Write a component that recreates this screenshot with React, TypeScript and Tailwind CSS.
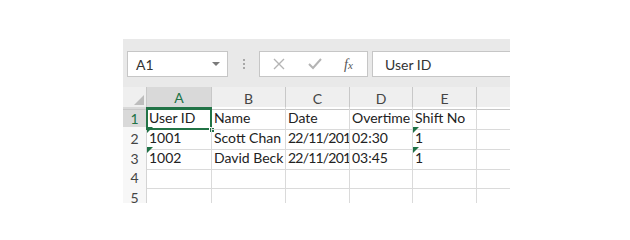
import React from 'react';

const cols = ['A', 'B', 'C', 'D', 'E', ''];

const rows: { cells: string[]; flags: boolean[] }[] = [
    { cells: ['User ID', 'Name', 'Date', 'Overtime', 'Shift No', ''], flags: [false, false, false, false, false, false] },
    { cells: ['1001', 'Scott Chan', '22/11/201', '02:30', '1', ''], flags: [true, false, false, false, true, false] },
    { cells: ['1002', 'David Beck', '22/11/201', '03:45', '1', ''], flags: [true, false, false, false, true, false] },
    { cells: ['', '', '', '', '', ''], flags: [false, false, false, false, false, false] },
    { cells: ['', '', '', '', '', ''], flags: [false, false, false, false, false, false] },
];

const FormulaBar: React.FC = () => (
    <div className="flex items-center h-[48px] pt-[12px] pb-[10px] pl-[4px] bg-[#e9e9e9]">
        <div className="relative flex items-center w-[101px] h-[26px] bg-white border border-[#c6c6c6] pl-[8px] text-[14px] text-[#333]">
            A1
            <span className="absolute right-[7px] top-[10px] w-0 h-0 border-l-[4px] border-r-[4px] border-t-[4px] border-l-transparent border-r-transparent border-t-[#7a7a7a]" />
        </div>
        <div className="flex flex-col gap-[2px] w-[31px] items-center">
            <span className="w-[2px] h-[2px] bg-[#a8a8a8]" />
            <span className="w-[2px] h-[2px] bg-[#a8a8a8]" />
            <span className="w-[2px] h-[2px] bg-[#a8a8a8]" />
        </div>
        <div className="flex items-center w-[109px] h-[26px] bg-white border border-[#c6c6c6]">
            <svg width="12" height="12" viewBox="0 0 12 12" className="ml-[13px]">
                <path d="M1 1 L11 11 M11 1 L1 11" stroke="#b4b4b4" strokeWidth="1.4" fill="none" />
            </svg>
            <svg width="14" height="12" viewBox="0 0 14 12" className="ml-[23px]">
                <path d="M1 6 L5 10 L13 1" stroke="#b4b4b4" strokeWidth="2" fill="none" />
            </svg>
            <span className="ml-[22px] text-[14px] italic text-[#555]" style={{ fontFamily: '"Liberation Serif", serif' }}>
                f<span className="text-[11px]">x</span>
            </span>
        </div>
        <div className="flex items-center flex-1 h-[26px] ml-[4px] bg-white border-y border-l border-[#c6c6c6] pl-[12px] text-[14px] text-[#333]">
            User ID
        </div>
    </div>
);

const App: React.FC = () => (
    <div className="w-[630px] h-[240px] bg-white pt-[39px] pl-[123px]" style={{ fontFamily: 'Lato, "Liberation Sans", sans-serif' }}>
        <div className="w-[387px]">
            <FormulaBar />
            <div className="grid grid-cols-[24px_65px_74px_64px_63px_64px_33px] h-[20px] bg-[#efefef] text-[14px] text-[#444]">
                <div className="relative border-r border-b border-[#c8c8c8]">
                    <span className="absolute right-[2px] bottom-[4px] w-0 h-0" style={{ borderTopWidth: 0, borderRightWidth: 0, borderLeftWidth: 10, borderBottomWidth: 10, borderStyle: 'solid', borderLeftColor: 'transparent', borderBottomColor: '#bdbdbd' }} />
                </div>
                {cols.map((c, i) => (
                    <div
                        key={i}
                        className={i === 0
                            ? 'flex items-center justify-center border-r border-b-2 border-r-[#c8c8c8] border-b-[#217346] bg-[#d9d9d9] text-[#217346]'
                            : i === 5
                                ? 'border-b border-[#c8c8c8]'
                                : 'flex items-center justify-center border-r border-b border-[#c8c8c8]'}
                    >
                        {c}
                    </div>
                ))}
            </div>
            <div className="h-[96px] overflow-hidden">
                {rows.map((row, r) => (
                    <div key={r} className="grid grid-cols-[24px_65px_74px_64px_63px_64px_33px] h-[20px] text-[14px] text-[#222]">
                        <div
                            className={r === 0
                                ? 'flex items-center justify-center border-r border-b border-[#c8c8c8] bg-[#d9d9d9] text-[#217346]'
                                : 'flex items-center justify-center border-r border-b border-[#d4d4d4] bg-[#f7f7f7] text-[#444]'}
                        >
                            {r + 1}
                        </div>
                        {row.cells.map((txt, c) => (
                            <div
                                key={c}
                                className={c === 5
                                    ? 'border-b border-[#dadada]'
                                    : 'relative flex items-end pb-[1px] pl-[2px] min-w-0 border-r border-b border-[#dadada] whitespace-nowrap'}
                            >
                                <span className={c === 2 && r > 0 ? 'block w-full overflow-hidden tracking-[-0.8px]' : 'block w-full overflow-hidden'}>{txt}</span>
                                {row.flags[c] && (
                                    <span className="absolute left-0 top-0 w-0 h-0 border-t-[6px] border-r-[6px] border-t-[#1e7145] border-r-transparent" />
                                )}
                                {r === 0 && c === 0 && (
                                    <>
                                        <span className="absolute -left-[1px] -top-[1px] -right-[1px] -bottom-[1px] border-2 border-[#217346] pointer-events-none" />
                                        <span className="absolute -right-[4px] -bottom-[4px] w-[6px] h-[6px] bg-[#217346] border border-white" />
                                    </>
                                )}
                            </div>
                        ))}
                    </div>
                ))}
            </div>
        </div>
    </div>
);

export default App;
